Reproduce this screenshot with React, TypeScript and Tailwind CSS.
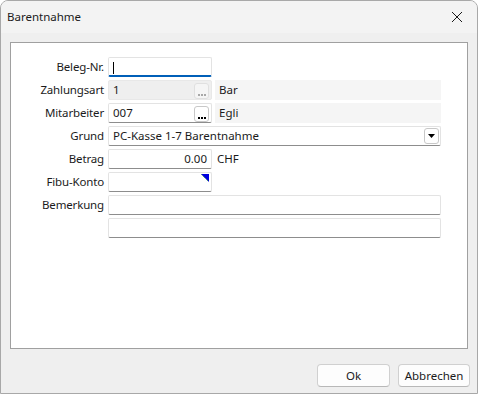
import React from "react";

const font = { fontFamily: '"Noto Sans", "Open Sans", sans-serif' };

function Ellipsis({ disabled }: { disabled?: boolean }) {
  return (
    <div
      className={`absolute right-[2px] top-[2px] h-[16px] w-[15px] rounded-[3px] border flex items-end justify-center pb-[2px] ${
        disabled ? "border-[#e0e0e0] bg-[#f5f5f5]" : "border-[#c8c8c8] bg-white"
      }`}
    >
      <div className="flex gap-[1px]">
        <span className={`block h-[2px] w-[2px] ${disabled ? "bg-[#a8a8a8]" : "bg-black"}`} />
        <span className={`block h-[2px] w-[2px] ${disabled ? "bg-[#a8a8a8]" : "bg-black"}`} />
        <span className={`block h-[2px] w-[2px] ${disabled ? "bg-[#a8a8a8]" : "bg-black"}`} />
      </div>
    </div>
  );
}

function Label({ children }: { children: React.ReactNode }) {
  return (
    <div className="w-[94px] pr-[1px] text-right text-[11.5px] tracking-[-0.15px] leading-[20px] text-[#1b1b1b] shrink-0">
      {children}
    </div>
  );
}

const inputBase =
  "relative h-[20px] bg-white border border-[#e3e3e3] border-b-[#8d8d8d] rounded-[2px] text-[11.5px] leading-[18px] px-[4px] text-[#1b1b1b]";

export default function App() {
  return (
    <div className="w-[479px] h-[395px] bg-white" style={font}>
      <div className="w-[478px] h-[394px] border border-[#a8a8a8] rounded-t-[8px] bg-[#efefef] flex flex-col overflow-hidden">
        {/* Title bar */}
        <div className="h-[32px] bg-[#f3f3f3] flex items-center justify-between pl-[6px] pr-[14px] shrink-0">
          <span className="text-[11.5px] text-[#1b1b1b]">Barentnahme</span>
          <svg width="12" height="12" viewBox="0 0 12 12">
            <path d="M1 1 L11 11 M11 1 L1 11" stroke="#1b1b1b" strokeWidth="1" />
          </svg>
        </div>
        {/* Panel */}
        <div className="mt-[9px] mx-[9px] h-[307px] bg-white border border-[#a0a0a0] pt-[14px] flex flex-col gap-[3px]">
          {/* Beleg-Nr */}
          <div className="flex items-start gap-[3px]">
            <Label>Beleg-Nr.</Label>
            <div className="relative h-[20px] w-[104px] bg-white border border-[#e3e3e3] border-b-2 border-b-[#005fb8] rounded-[2px] px-[4px]">
              <span className="absolute left-[4px] top-[4px] h-[12px] w-[1px] bg-black" />
            </div>
          </div>
          {/* Zahlungsart */}
          <div className="flex items-start gap-[3px]">
            <Label>Zahlungsart</Label>
            <div className="relative h-[20px] w-[104px] bg-[#efefef] border border-[#e8e8e8] rounded-[2px] text-[11.5px] leading-[18px] px-[4px] text-[#1b1b1b]">
              1
              <Ellipsis disabled />
            </div>
            <div className="h-[20px] w-[226px] bg-[#f5f5f5] text-[11.5px] leading-[20px] px-[4px] text-[#1b1b1b]">Bar</div>
          </div>
          {/* Mitarbeiter */}
          <div className="flex items-start gap-[3px]">
            <Label>Mitarbeiter</Label>
            <div className={`${inputBase} w-[104px]`}>
              007
              <Ellipsis />
            </div>
            <div className="h-[20px] w-[226px] bg-[#f5f5f5] text-[11.5px] leading-[20px] px-[4px] text-[#1b1b1b]">Egli</div>
          </div>
          {/* Grund */}
          <div className="flex items-start gap-[3px]">
            <Label>Grund</Label>
            <div className={`${inputBase} w-[333px]`}>
              PC-Kasse 1-7 Barentnahme
              <div className="absolute right-[1px] top-[1px] h-[16px] w-[15px] rounded-[3px] border border-[#c8c8c8] bg-white flex items-center justify-center">
                <svg width="7" height="4" viewBox="0 0 7 4">
                  <path d="M0 0 H7 L3.5 4 Z" fill="#000" />
                </svg>
              </div>
            </div>
          </div>
          {/* Betrag */}
          <div className="flex items-start gap-[3px]">
            <Label>Betrag</Label>
            <div className={`${inputBase} w-[104px] text-right`}>0.00</div>
            <div className="text-[11.5px] leading-[20px] pl-[2px] text-[#1b1b1b]">CHF</div>
          </div>
          {/* Fibu-Konto */}
          <div className="flex items-start gap-[3px]">
            <Label>Fibu-Konto</Label>
            <div className={`${inputBase} w-[104px]`}>
              <svg className="absolute right-[2px] top-[1px]" width="8" height="8" viewBox="0 0 8 8">
                <path d="M0 0 H8 V8 Z" fill="#0000e0" />
                <path d="M0.5 0.5 L7.5 7.5" stroke="#2a9a2a" strokeWidth="1" strokeDasharray="1 1" />
              </svg>
            </div>
          </div>
          {/* Bemerkung */}
          <div className="flex items-start gap-[3px]">
            <Label>Bemerkung</Label>
            <div className={`${inputBase} w-[333px]`}></div>
          </div>
          <div className="flex items-start gap-[3px]">
            <div className="w-[94px] shrink-0" />
            <div className={`${inputBase} w-[333px]`}></div>
          </div>
        </div>
        {/* Buttons */}
        <div className="flex justify-end gap-[8px] pr-[7px] mt-[15px]">
          <button className="w-[73px] h-[23px] rounded-[4px] border border-[#d0d0d0] border-b-[#b8b8b8] bg-[#fdfdfd] text-[11.5px] text-[#1b1b1b]">
            Ok
          </button>
          <button className="w-[72px] h-[23px] rounded-[4px] border border-[#d0d0d0] border-b-[#b8b8b8] bg-[#fdfdfd] text-[11.5px] text-[#1b1b1b]">
            Abbrechen
          </button>
        </div>
      </div>
    </div>
  );
}
